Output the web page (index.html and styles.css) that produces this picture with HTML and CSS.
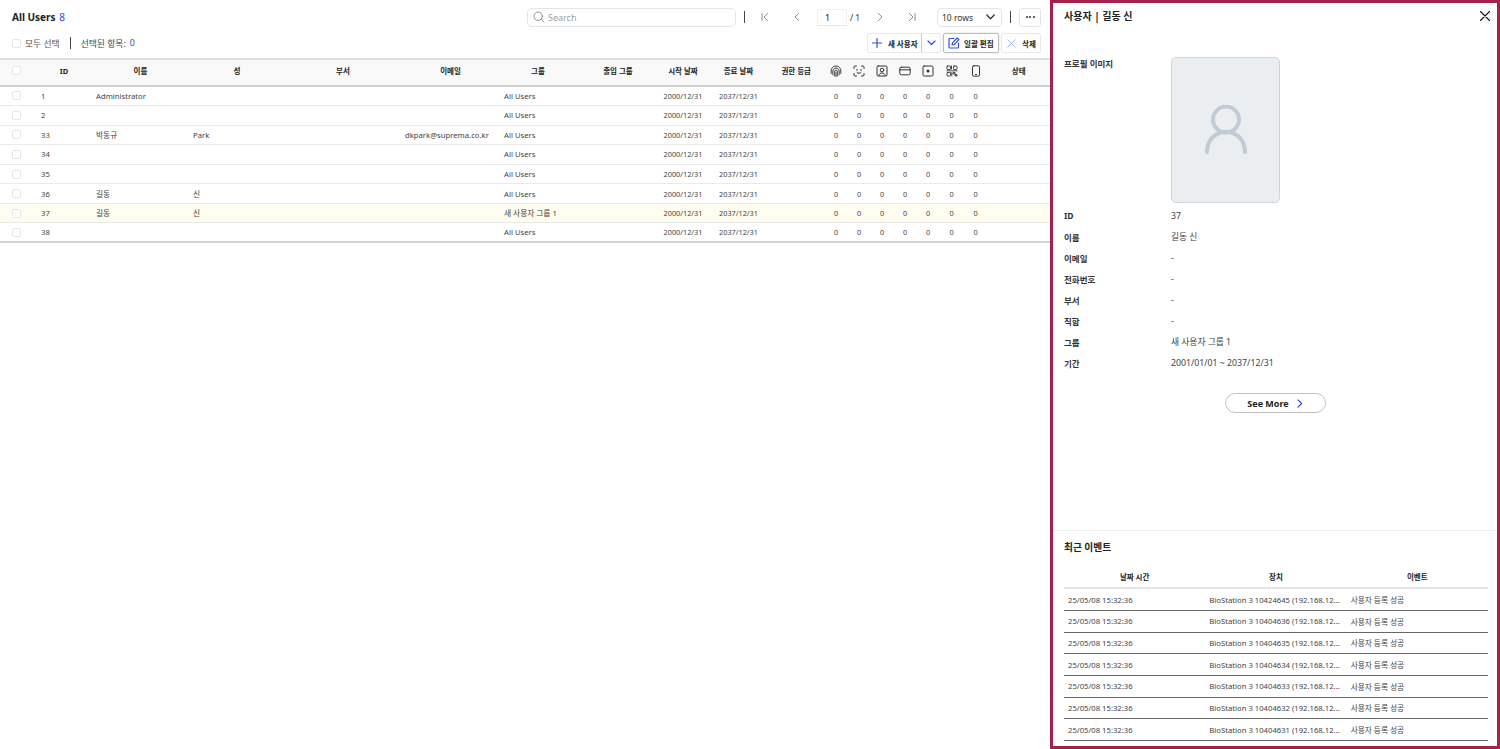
FILE: index.html
```html
<!DOCTYPE html>
<html lang="ko">
<head>
  <meta charset="UTF-8" />
  <title>All Users</title>
  <link rel="stylesheet" href="styles.css">
</head>
<body>
  <div class="page">
    <main class="users">
      <div class="toolbar">
        <h1 class="title">All Users <span class="count">8</span></h1>
        <div class="search">
          <svg width="12" height="12" viewBox="0 0 12 12" class="ico-gray"><circle cx="5.2" cy="5.2" r="4.2"/><path d="M8.3 8.3 11 11"/></svg>
          <span>Search</span>
        </div>
        <i class="sep"></i>
        <div class="pager">
          <svg class="pg pg-first ico-gray" width="8" height="8" viewBox="0 0 8 8"><path d="M1 .5v7M6.5 .5 3 4l3.5 3.5"/></svg>
          <svg class="pg pg-prev ico-gray" width="8" height="8" viewBox="0 0 8 8"><path d="M5.5 .5 2 4l3.5 3.5"/></svg>
          <div class="page-input">1</div>
          <span class="page-total">/ 1</span>
          <svg class="pg pg-next ico-gray" width="8" height="8" viewBox="0 0 8 8"><path d="M2.5 .5 6 4 2.5 7.5"/></svg>
          <svg class="pg pg-last ico-gray" width="8" height="8" viewBox="0 0 8 8"><path d="M7 .5v7M1.5 .5 5 4 1.5 7.5"/></svg>
        </div>
        <div class="rows-select">
          <span>10 rows</span>
          <svg width="9" height="6" viewBox="0 0 9 6" class="ico-dark strong"><path d="M.8 1 4.5 4.7 8.2 1"/></svg>
        </div>
        <i class="sep sep-last"></i>
        <div class="more"><b></b><b></b><b></b></div>
      </div>

      <div class="actions">
        <span class="check"></span>
        <span class="select-all">모두 선택</span>
        <i class="sep"></i>
        <span class="selected">선택된 항목:</span>
        <span class="count">0</span>
        <div class="buttons">
          <div class="btn btn-new">
            <span class="btn-main">
              <svg width="10" height="10" viewBox="0 0 10 10" class="ico-blue"><path d="M5 .5v9M.5 5h9"/></svg>
              새 사용자
            </span>
            <span class="btn-drop"><svg width="9" height="6" viewBox="0 0 9 6" class="ico-blue"><path d="M1 1 4.5 4.5 8 1"/></svg></span>
          </div>
          <div class="btn btn-edit">
            <svg width="12" height="12" viewBox="0 0 12 12" class="ico-blue"><path d="M6 1.5H2A1 1 0 0 0 1 2.500V10a1 1 0 0 0 1 1h7.500a1 1 0 0 0 1-1V6M4.500 5.800 9.300 1l1.700 1.700-4.800 4.800-2.100.4z"/></svg>
            일괄 편집
          </div>
          <div class="btn btn-del">
            <svg width="9" height="9" viewBox="0 0 9 9" class="ico-light"><path d="M.7 .7l7.600 7.600M8.300 .7 .7 8.300"/></svg>
            삭제
          </div>
        </div>
      </div>

      <div class="grid">
        <div class="row head">
          <div class="cell"><span class="check"></span></div>
          <div class="cell mid">ID</div>
          <div class="cell mid">이름</div>
          <div class="cell mid">성</div>
          <div class="cell mid">부서</div>
          <div class="cell mid">이메일</div>
          <div class="cell mid">그룹</div>
          <div class="cell mid">출입 그룹</div>
          <div class="cell mid">시작 날짜</div>
          <div class="cell mid">종료 날짜</div>
          <div class="cell mid tier">권한 등급</div>
          <div class="cell mid"><svg width="12" height="12" viewBox="0 0 12 12" class="ico-dark"><path d="M1.200 8.500C.8 5 1.500 1 6 1s5.200 4 4.800 7.500M3 10c-.5-2-.8-7 3-7s3.500 5 3 7M4.700 11c-.3-2-.8-6 1.300-6s1.600 4 1.300 6M6 7v4.500"/></svg></div>
          <div class="cell mid"><svg width="12" height="12" viewBox="0 0 12 12" class="ico-dark"><path d="M1 3.500V2a1 1 0 0 1 1-1h1.500M8.500 1H10a1 1 0 0 1 1 1v1.500M11 8.500V10a1 1 0 0 1-1 1H8.500M3.500 11H2a1 1 0 0 1-1-1V8.500M4 4.300v1M8 4.300v1M4 7.500c1.200 1.100 2.800 1.100 4 0"/></svg></div>
          <div class="cell mid"><svg width="12" height="12" viewBox="0 0 12 12" class="ico-dark"><rect x="1" y="1" width="10" height="10" rx="1.200"/><circle cx="6" cy="5" r="1.800"/><path d="M2.800 10.500C3.200 8.500 4.500 8 6 8s2.800.5 3.200 2.500"/></svg></div>
          <div class="cell mid"><svg width="12" height="12" viewBox="0 0 12 12" class="ico-dark"><rect x=".8" y="2.200" width="10.400" height="7.600" rx="1.600"/><path d="M.8 4.800h10.400"/></svg></div>
          <div class="cell mid"><svg width="12" height="12" viewBox="0 0 12 12" class="ico-dark"><rect x="1" y="1" width="10" height="10" rx="1.200"/><circle class="ico-fill" cx="6" cy="6" r="1.500"/></svg></div>
          <div class="cell mid"><svg width="12" height="12" viewBox="0 0 12 12" class="ico-dark thin"><rect x="1" y="1" width="3.500" height="3.500" rx=".6"/><rect x="7.500" y="1" width="3.500" height="3.500" rx=".6"/><rect x="1" y="7.500" width="3.500" height="3.500" rx=".6"/><path d="M7.500 7.500H9v1.500H7.500zM9.500 9.500H11V11H9.500zM5.500 1v3M5.500 5.800H11M1 5.800h3.500M5.800 7.500V11"/></svg></div>
          <div class="cell mid"><svg width="12" height="12" viewBox="0 0 12 12" class="ico-dark"><rect x="2.500" y=".8" width="7" height="10.400" rx="1.300"/><path d="M5.500 9.500h1"/></svg></div>
          <div class="cell mid">상태</div>
        </div>

        <div class="row">
          <div class="cell"><span class="check"></span></div><div class="cell num">1</div><div class="cell">Administrator</div><div class="cell"></div><div class="cell"></div><div class="cell"></div><div class="cell">All Users</div><div class="cell"></div><div class="cell mid">2000/12/31</div><div class="cell mid">2037/12/31</div><div class="cell"></div><div class="cell mid">0</div><div class="cell mid">0</div><div class="cell mid">0</div><div class="cell mid">0</div><div class="cell mid">0</div><div class="cell mid">0</div><div class="cell mid">0</div><div class="cell"></div>
        </div>
        <div class="row">
          <div class="cell"><span class="check"></span></div><div class="cell num">2</div><div class="cell"></div><div class="cell"></div><div class="cell"></div><div class="cell"></div><div class="cell">All Users</div><div class="cell"></div><div class="cell mid">2000/12/31</div><div class="cell mid">2037/12/31</div><div class="cell"></div><div class="cell mid">0</div><div class="cell mid">0</div><div class="cell mid">0</div><div class="cell mid">0</div><div class="cell mid">0</div><div class="cell mid">0</div><div class="cell mid">0</div><div class="cell"></div>
        </div>
        <div class="row">
          <div class="cell"><span class="check"></span></div><div class="cell num">33</div><div class="cell">박동규</div><div class="cell">Park</div><div class="cell"></div><div class="cell">dkpark@suprema.co.kr</div><div class="cell">All Users</div><div class="cell"></div><div class="cell mid">2000/12/31</div><div class="cell mid">2037/12/31</div><div class="cell"></div><div class="cell mid">0</div><div class="cell mid">0</div><div class="cell mid">0</div><div class="cell mid">0</div><div class="cell mid">0</div><div class="cell mid">0</div><div class="cell mid">0</div><div class="cell"></div>
        </div>
        <div class="row">
          <div class="cell"><span class="check"></span></div><div class="cell num">34</div><div class="cell"></div><div class="cell"></div><div class="cell"></div><div class="cell"></div><div class="cell">All Users</div><div class="cell"></div><div class="cell mid">2000/12/31</div><div class="cell mid">2037/12/31</div><div class="cell"></div><div class="cell mid">0</div><div class="cell mid">0</div><div class="cell mid">0</div><div class="cell mid">0</div><div class="cell mid">0</div><div class="cell mid">0</div><div class="cell mid">0</div><div class="cell"></div>
        </div>
        <div class="row">
          <div class="cell"><span class="check"></span></div><div class="cell num">35</div><div class="cell"></div><div class="cell"></div><div class="cell"></div><div class="cell"></div><div class="cell">All Users</div><div class="cell"></div><div class="cell mid">2000/12/31</div><div class="cell mid">2037/12/31</div><div class="cell"></div><div class="cell mid">0</div><div class="cell mid">0</div><div class="cell mid">0</div><div class="cell mid">0</div><div class="cell mid">0</div><div class="cell mid">0</div><div class="cell mid">0</div><div class="cell"></div>
        </div>
        <div class="row">
          <div class="cell"><span class="check"></span></div><div class="cell num">36</div><div class="cell">길동</div><div class="cell">신</div><div class="cell"></div><div class="cell"></div><div class="cell">All Users</div><div class="cell"></div><div class="cell mid">2000/12/31</div><div class="cell mid">2037/12/31</div><div class="cell"></div><div class="cell mid">0</div><div class="cell mid">0</div><div class="cell mid">0</div><div class="cell mid">0</div><div class="cell mid">0</div><div class="cell mid">0</div><div class="cell mid">0</div><div class="cell"></div>
        </div>
        <div class="row active">
          <div class="cell"><span class="check"></span></div><div class="cell num">37</div><div class="cell">길동</div><div class="cell">신</div><div class="cell"></div><div class="cell"></div><div class="cell">새 사용자 그룹 1</div><div class="cell"></div><div class="cell mid">2000/12/31</div><div class="cell mid">2037/12/31</div><div class="cell"></div><div class="cell mid">0</div><div class="cell mid">0</div><div class="cell mid">0</div><div class="cell mid">0</div><div class="cell mid">0</div><div class="cell mid">0</div><div class="cell mid">0</div><div class="cell"></div>
        </div>
        <div class="row last">
          <div class="cell"><span class="check"></span></div><div class="cell num">38</div><div class="cell"></div><div class="cell"></div><div class="cell"></div><div class="cell"></div><div class="cell">All Users</div><div class="cell"></div><div class="cell mid">2000/12/31</div><div class="cell mid">2037/12/31</div><div class="cell"></div><div class="cell mid">0</div><div class="cell mid">0</div><div class="cell mid">0</div><div class="cell mid">0</div><div class="cell mid">0</div><div class="cell mid">0</div><div class="cell mid">0</div><div class="cell"></div>
        </div>
      </div>
    </main>

    <aside class="panel">
      <div class="panel-head">
        <h2>사용자 | 길동 신</h2>
        <svg width="10" height="10" viewBox="0 0 10 10" class="ico-black"><path d="M.5 .5l9 9M9.500 .5l-9 9"/></svg>
      </div>

      <div class="profile">
        <div class="label">프로필 이미지</div>
        <div class="avatar">
          <svg width="46" height="50" viewBox="0 0 46 50"><circle cx="23" cy="14.500" r="13"/><path d="M4 47c0-12 8-20 19-20s19 8 19 20"/></svg>
        </div>
      </div>

      <div class="info">
        <div class="label">ID</div><div class="value">37</div>
        <div class="label">이름</div><div class="value">길동 신</div>
        <div class="label">이메일</div><div class="value">-</div>
        <div class="label">전화번호</div><div class="value">-</div>
        <div class="label">부서</div><div class="value">-</div>
        <div class="label">직함</div><div class="value">-</div>
        <div class="label">그룹</div><div class="value">새 사용자 그룹 1</div>
        <div class="label">기간</div><div class="value">2001/01/01 ~ 2037/12/31</div>
      </div>

      <div class="see-more">
        <div class="see-more-btn">
          See More
          <svg width="6" height="9" viewBox="0 0 6 9" class="ico-blue"><path d="M1 .8 4.700 4.500 1 8.200"/></svg>
        </div>
      </div>

      <section class="events">
        <h3>최근 이벤트</h3>
        <div class="ev-row ev-head"><div>날짜 시간</div><div>장치</div><div>이벤트</div></div>
        <div class="ev-row"><div>25/05/08 15:32:36</div><div>BioStation 3 10424645 (192.168.12...</div><div>사용자 등록 성공</div></div>
        <div class="ev-row"><div>25/05/08 15:32:36</div><div>BioStation 3 10404636 (192.168.12...</div><div>사용자 등록 성공</div></div>
        <div class="ev-row"><div>25/05/08 15:32:36</div><div>BioStation 3 10404635 (192.168.12...</div><div>사용자 등록 성공</div></div>
        <div class="ev-row"><div>25/05/08 15:32:36</div><div>BioStation 3 10404634 (192.168.12...</div><div>사용자 등록 성공</div></div>
        <div class="ev-row"><div>25/05/08 15:32:36</div><div>BioStation 3 10404633 (192.168.12...</div><div>사용자 등록 성공</div></div>
        <div class="ev-row"><div>25/05/08 15:32:36</div><div>BioStation 3 10404632 (192.168.12...</div><div>사용자 등록 성공</div></div>
        <div class="ev-row"><div>25/05/08 15:32:36</div><div>BioStation 3 10404631 (192.168.12...</div><div>사용자 등록 성공</div></div>
      </section>
    </aside>
  </div>
</body>
</html>
```

FILE: styles.css
```css
* {
  box-sizing: border-box;
}
html, body {
  margin: 0;
  height: 749px;
  overflow: hidden;
}
body {
  font-family: "Noto Sans", "Noto Sans CJK KR", sans-serif;
  font-size: 7.700px;
  color: #333;
  background: #fff;
}
svg {
  fill: none;
  stroke-linecap: round;
  stroke-linejoin: round;
  flex: none;
}
.ico-gray { stroke: #8a8f96; stroke-width: 1; }
.ico-dark { stroke: #333; stroke-width: 1; }
.ico-dark.thin { stroke-width: .9; }
.ico-dark.strong { stroke-width: 1.300; }
.ico-black { stroke: #111; stroke-width: 1.100; }
.ico-blue { stroke: #3450dc; stroke-width: 1.200; }
.ico-light { stroke: #a9b4e8; stroke-width: 1; }
.ico-fill { fill: #333; stroke: none; }

.page {
  display: flex;
  height: 749px;
}

/* left side */
.users {
  width: 1050px;
  flex: none;
}
.toolbar {
  display: flex;
  align-items: center;
  height: 33px;
  padding: 1px 9px 0 12px;
}
.title {
  margin: 0;
  font-size: 10px;
  font-weight: 700;
  color: #222;
  width: 515px;
  flex: none;
}
.count {
  color: #2f45e0;
  font-weight: 400;
  margin-left: 1px;
}
.search {
  display: flex;
  align-items: center;
  gap: 3px;
  width: 209px;
  height: 19px;
  padding-left: 5px;
  border: 1px solid #e3e5e8;
  border-radius: 5px;
  color: #9a9fa6;
  font-size: 9px;
}
.sep {
  display: block;
  width: 1px;
  height: 12px;
  background: #444;
  flex: none;
}
.toolbar > .sep {
  margin-left: 8px;
}
.pager {
  display: flex;
  align-items: center;
  width: 192px;
}
.pg-first { margin-left: 16px; }
.pg-prev { margin-left: 24px; }
.pg-next { margin-left: 16px; }
.pg-last { margin-left: 24px; }
.page-input {
  width: 30px;
  height: 17px;
  margin-left: 16px;
  padding-left: 7px;
  line-height: 15px;
  font-size: 9px;
  border: 1px solid #f0f1f3;
  border-bottom-color: #e3e5e8;
  color: #222;
}
.page-total {
  margin-left: 3px;
  font-size: 8.500px;
  color: #333;
}
.rows-select {
  display: flex;
  align-items: center;
  justify-content: space-between;
  width: 65px;
  height: 19px;
  padding: 0 6px 0 4px;
  border: 1px solid #e3e5e8;
  border-radius: 4px;
  font-size: 8.500px;
}
.toolbar > .sep-last {
  margin-left: 8px;
}
.more {
  display: flex;
  align-items: center;
  justify-content: center;
  gap: 1.500px;
  width: 22px;
  height: 19px;
  margin-left: 8px;
  border: 1px solid #e3e5e8;
  border-radius: 3px;
}
.more b {
  width: 2px;
  height: 2px;
  border-radius: 50%;
  background: #333;
}

.actions {
  display: flex;
  align-items: center;
  height: 25px;
  padding: 0 9px 5px 12px;
  font-size: 8.800px;
}
.check {
  display: block;
  width: 9px;
  height: 9px;
  border: 1px solid #e4e6e9;
  border-radius: 2px;
  background: #fff;
}
.select-all {
  margin-left: 4px;
  color: #555;
}
.actions .sep {
  margin-left: 10px;
}
.selected {
  margin-left: 10px;
  color: #444;
}
.actions .count {
  margin-left: 4px;
}
.buttons {
  display: flex;
  gap: 2px;
  margin-left: auto;
}
.btn {
  display: flex;
  align-items: center;
  height: 20px;
  border: 1px solid #e8eaed;
  border-radius: 2px;
  font-weight: 700;
  font-size: 7.500px;
  color: #222;
}
.btn-new {
  width: 74px;
}
.btn-main {
  display: flex;
  align-items: center;
  gap: 6px;
  width: 54px;
  height: 100%;
  padding-left: 4px;
  border-right: 1px solid #c9ccd1;
}
.btn-drop {
  display: flex;
  flex: 1;
  align-items: center;
  justify-content: center;
}
.btn-edit {
  gap: 4px;
  width: 56px;
  padding-left: 4px;
  border-color: #b9bdc3;
  box-shadow: 0 0 2px rgba(0, 0, 0, .2);
}
.btn-del {
  gap: 6px;
  width: 40px;
  padding-left: 5px;
}

/* table */
.grid {
  border-top: 2px solid #dedede;
}
.row {
  display: grid;
  grid-template-columns: 36px 56px 97px 96px 116px 99px 76px 84px 46px 65px 53.500px 23px 23px 23px 23px 23px 24px 24px 62.500px;
  height: 19.570px;
  align-items: center;
  border-bottom: 1px solid #eaeaea;
  color: #444;
}
.row:not(.head) .cell.mid {
  font-size: 7.300px;
}
.row.head {
  height: 26.500px;
  padding-bottom: 3px;
  background: #f9f9f9;
  border-bottom: 2px solid #cfcfcf;
  font-weight: 700;
  color: #222;
  font-size: 7.500px;
}
.row.active {
  background: #fffdf0;
}
.row.last {
  border-bottom: 2px solid #d4d4d4;
}
.cell {
  padding-left: 4px;
  white-space: nowrap;
  overflow: hidden;
  line-height: 12px;
}
.cell:first-child {
  padding-left: 12px;
}
.cell.mid {
  display: flex;
  justify-content: center;
  padding-left: 0;
}
.cell.mid.tier {
  padding-right: 3px;
}
.cell.num {
  padding-left: 5px;
}

/* detail panel */
.panel {
  display: flex;
  flex-direction: column;
  width: 450px;
  flex: none;
  border: 3px solid #a5214a;
  height: 749px;
  color: #444;
}
.panel-head {
  display: flex;
  align-items: center;
  justify-content: space-between;
  height: 25px;
  padding: 0 7px 0 11px;
}
.panel-head h2 {
  margin: 0;
  font-size: 10px;
  font-weight: 700;
  color: #222;
}
.label {
  font-weight: 700;
  color: #333;
  font-size: 8.500px;
}
.profile {
  display: grid;
  grid-template-columns: 107px 109px;
  margin-top: 29px;
  padding-left: 11px;
}
.avatar {
  display: flex;
  align-items: center;
  justify-content: center;
  width: 109px;
  height: 146px;
  background: #ebeef1;
  border: 1px solid #cfd4da;
  border-radius: 5px;
}
.avatar svg {
  stroke: #c2cbd3;
  stroke-width: 4;
}
.info {
  display: grid;
  grid-template-columns: 107px 1fr;
  grid-auto-rows: 21px;
  align-items: center;
  margin-top: 2px;
  padding-left: 11px;
  font-size: 8.750px;
}
.see-more {
  display: flex;
  justify-content: center;
  margin-top: 20px;
}
.see-more-btn {
  display: flex;
  align-items: center;
  justify-content: center;
  gap: 8px;
  width: 101px;
  height: 20px;
  border: 1px solid #bfc3c8;
  border-radius: 11px;
  font-size: 9px;
  font-weight: 700;
  color: #222;
}
.events {
  margin-top: auto;
  padding: 0 9px 5px 11px;
  border-top: 1px solid #eeeeee;
}
.events h3 {
  margin: 10px 0 11px;
  font-size: 9.700px;
  line-height: 14px;
  font-weight: 700;
  color: #222;
}
.ev-row {
  display: grid;
  grid-template-columns: repeat(3, 1fr);
  height: 21.700px;
  align-items: center;
  border-bottom: 1px solid #666;
  color: #444;
}
.ev-row > div {
  padding: 0 0 0 4px;
  white-space: nowrap;
  overflow: hidden;
}
.ev-head {
  height: 23px;
  padding-bottom: 1px;
  border-bottom: 2px solid #e3e3e3;
  font-weight: 700;
  color: #222;
  font-size: 7.500px;
  text-align: center;
}
.ev-row.ev-head > div {
  padding: 0;
}
```
